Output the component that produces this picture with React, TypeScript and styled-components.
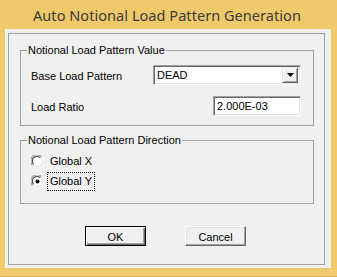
import React from "react";
import styled, { createGlobalStyle } from "styled-components";

const Global = createGlobalStyle`
  html, body { margin: 0; padding: 0; background: #F0C96B; }
  #root { width: 337px; height: 277px; }
`;

const Window = styled.div`
  width: 337px;
  height: 277px;
  box-sizing: border-box;
  background: #F0C96B;
  border-bottom: 1px solid #D9AE53;
  display: flex;
  flex-direction: column;
`;

const TitleBar = styled.div`
  height: 29px;
  display: flex;
  align-items: center;
  justify-content: center;
  padding-right: 3px;
  font-family: "Noto Sans", "Open Sans", sans-serif;
  font-size: 14.5px;
  color: #3A3A3A;
  letter-spacing: 0.05px;
`;

const Client = styled.div`
  margin: 0 6px 0 5px;
  height: 239px;
  box-sizing: border-box;
  padding: 4px 6px 3px 2px;
  background: #F0F0F0;
  border-left: 1px solid #F7F7F7;
`;

const Panel = styled.div`
  height: 232px;
  box-sizing: border-box;
  border: 1px solid #A0A0A0;
  padding: 0 10px 0 11px;
  display: flex;
  flex-direction: column;
  font-family: "Liberation Sans", Arial, sans-serif;
  font-size: 11px;
  color: #000;
`;

const Group = styled.div<{ $top: number }>`
  position: relative;
  margin-top: ${(p) => p.$top}px;
  border: 1px solid #A0A0A0;
`;

const Caption = styled.span`
  position: absolute;
  top: -8px;
  left: 6px;
  padding: 0 1px;
  background: #F0F0F0;
  line-height: 14px;
  white-space: nowrap;
`;

const ValueGrid = styled.div`
  display: grid;
  grid-template-columns: 1fr auto;
  row-gap: 11px;
  align-items: center;
  padding: 14px 12px 9px 10px;
`;

const Label = styled.span`
  line-height: 14px;
  margin-top: 1px;
`;

const Sunken = styled.div<{ $w: number }>`
  width: ${(p) => p.$w}px;
  height: 20px;
  box-sizing: border-box;
  justify-self: end;
  display: flex;
  align-items: center;
  background: #fff;
  border-top: 1px solid #A0A0A0;
  border-left: 1px solid #A0A0A0;
  border-right: 1px solid #FFFFFF;
  border-bottom: 1px solid #FFFFFF;
  box-shadow: inset 1px 1px 0 #696969, inset -1px -1px 0 #E3E3E3;
  padding: 2px 2px 2px 3px;
`;

const FieldText = styled.span`
  flex: 1;
  line-height: 14px;
`;

const DropButton = styled.div`
  width: 16px;
  height: 16px;
  box-sizing: border-box;
  background: #F0F0F0;
  border-top: 1px solid #E3E3E3;
  border-left: 1px solid #E3E3E3;
  border-right: 1px solid #696969;
  border-bottom: 1px solid #696969;
  box-shadow: inset 1px 1px 0 #fff, inset -1px -1px 0 #A0A0A0;
  display: flex;
  align-items: center;
  justify-content: center;
`;

const RadioList = styled.div`
  display: flex;
  flex-direction: column;
  padding: 10px 10px 12px 10px;
`;

const RadioRow = styled.div`
  height: 20px;
  display: flex;
  align-items: center;
  gap: 3px;
`;

const RadioText = styled.span<{ $focus?: boolean }>`
  padding: 1px 2px 2px 2px;
  line-height: 14px;
  border: 1px dotted ${(p) => (p.$focus ? "#000" : "transparent")};
`;

const ButtonRow = styled.div`
  margin-top: 22px;
  display: flex;
  gap: 39px;
  padding-left: 65px;
`;

const Button = styled.div<{ $default?: boolean }>`
  width: 61px;
  height: 20px;
  box-sizing: border-box;
  display: flex;
  align-items: center;
  justify-content: center;
  background: #F0F0F0;
  border: 1px solid ${(p) => (p.$default ? "#000" : "transparent")};
  ${(p) =>
    p.$default
      ? "box-shadow: inset 1px 1px 0 #fff, inset -1px -1px 0 #696969, inset -2px -2px 0 #A0A0A0;"
      : "border-color: #fff #696969 #696969 #fff; box-shadow: inset -1px -1px 0 #A0A0A0, inset 1px 1px 0 #E3E3E3;"}
  line-height: 14px;
  padding-top: 1px;
`;

const Radio: React.FC<{ checked?: boolean }> = ({ checked }) => (
  <svg width="13" height="13" viewBox="0 0 13 13">
    <circle cx="6.5" cy="6.5" r="5" fill="#fff" />
    <path d="M1.55 10.4 A5.8 5.8 0 0 1 10.4 1.55" fill="none" stroke="#A0A0A0" strokeWidth="1.2" />
    <path d="M2.7 9.3 A4.6 4.6 0 0 1 9.3 2.7" fill="none" stroke="#505050" strokeWidth="1.2" />
    <path d="M11.45 2.6 A5.8 5.8 0 0 1 2.6 11.45" fill="none" stroke="#FFFFFF" strokeWidth="1.2" />
    <path d="M10.3 3.7 A4.6 4.6 0 0 1 3.7 10.3" fill="none" stroke="#E3E3E3" strokeWidth="1.2" />
    {checked && <circle cx="6.5" cy="6.5" r="2" fill="#000" />}
  </svg>
);

export default function App() {
  return (
    <>
      <Global />
      <Window>
        <TitleBar>Auto Notional Load Pattern Generation</TitleBar>
        <Client>
          <Panel>
            <Group $top={16}>
              <Caption>Notional Load Pattern Value</Caption>
              <ValueGrid>
                <Label>Base Load Pattern</Label>
                <Sunken $w={148}>
                  <FieldText>DEAD</FieldText>
                  <DropButton>
                    <svg width="7" height="4" viewBox="0 0 7 4">
                      <path d="M0 0H7L3.5 4Z" fill="#000" />
                    </svg>
                  </DropButton>
                </Sunken>
                <Label>Load Ratio</Label>
                <Sunken $w={88}>
                  <FieldText>2.000E-03</FieldText>
                </Sunken>
              </ValueGrid>
            </Group>
            <Group $top={14}>
              <Caption>Notional Load Pattern Direction</Caption>
              <RadioList>
                <RadioRow>
                  <Radio />
                  <RadioText>Global X</RadioText>
                </RadioRow>
                <RadioRow>
                  <Radio checked />
                  <RadioText $focus>Global Y</RadioText>
                </RadioRow>
              </RadioList>
            </Group>
            <ButtonRow>
              <Button $default>OK</Button>
              <Button>Cancel</Button>
            </ButtonRow>
          </Panel>
        </Client>
      </Window>
    </>
  );
}
